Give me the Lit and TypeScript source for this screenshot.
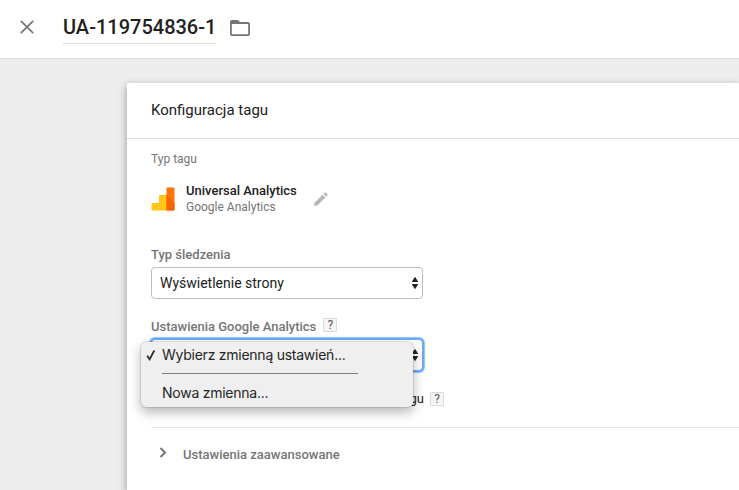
import { LitElement, html, css, svg } from "lit";
import { customElement, property } from "lit/decorators.js";

const arrows = html`<svg class="arrows" width="8" height="14" viewBox="0 0 8 14">
  ${svg`<path d="M4 .7 7.300 6H.7zM4 13.300 7.300 8H.7z" fill="#222"/>`}
</svg>`;

@customElement("select-box")
export class SelectBox extends LitElement {
  @property() label = "";
  @property({ type: Boolean, reflect: true }) focused = false;

  static styles = css`
    :host {
      display: flex;
      align-items: center;
      justify-content: space-between;
      box-sizing: border-box;
      width: 272px;
      height: 32px;
      padding: 0 3px 0 8px;
      border: 1px solid #bdbdbd;
      border-radius: 4px;
      background: #fff;
      color: #212121;
      font-size: 14px;
    }
    :host([focused]) {
      border-color: #6aa9f0;
      box-shadow: 0 0 0 1px #6baaf5, 0 0 1px 2px #8fc0f8;
    }
    svg {
      display: block;
    }
  `;

  render() {
    return html`<span>${this.label}</span>${arrows}`;
  }
}

@customElement("help-badge")
export class HelpBadge extends LitElement {
  static styles = css`
    :host {
      display: block;
      box-sizing: border-box;
      width: 14px;
      height: 14px;
      border: 1px solid #dadada;
      border-radius: 1px;
      background: #f5f5f5;
      color: #555;
      font-size: 12px;
      line-height: 13px;
      text-align: center;
    }
  `;

  render() {
    return html`?`;
  }
}

@customElement("option-menu")
export class OptionMenu extends LitElement {
  static styles = css`
    :host {
      display: flex;
      flex-direction: column;
      box-sizing: border-box;
      width: 272px;
      height: 65px;
      padding-top: 3px;
      border-radius: 5px;
      background: #efefef;
      box-shadow: 0 0 0 0.5px rgba(0, 0, 0, 0.2), 0 5px 12px rgba(0, 0, 0, 0.3);
      color: #262626;
      font: 14px/19px Inter, sans-serif;
      letter-spacing: -0.25px;
    }
    .item {
      display: flex;
      align-items: center;
      height: 19px;
      white-space: nowrap;
    }
    .mark {
      width: 21px;
      box-sizing: border-box;
      padding-left: 5px;
    }
    .mark svg {
      display: block;
    }
    .rule {
      width: 196px;
      height: 1px;
      margin: 9px 0 9px 21px;
      background: #7d7d7d;
    }
  `;

  render() {
    return html`
      <div class="item">
        <span class="mark">
          <svg width="10" height="12" viewBox="0 0 10 12">
            <path d="M1.200 6.800 3.600 10.300 8.300 1.500" fill="none" stroke="#262626" stroke-width="1.700" />
          </svg>
        </span>
        <span>Wybierz zmienną ustawień...</span>
      </div>
      <div class="rule"></div>
      <div class="item"><span class="mark"></span><span>Nowa zmienna...</span></div>
    `;
  }
}

@customElement("app-root")
export class AppRoot extends LitElement {
  static styles = css`
    :host {
      display: flex;
      flex-direction: column;
      height: 490px;
      overflow: hidden;
      background: #ededed;
      color: #212121;
      font-family: Roboto, sans-serif;
    }
    svg {
      display: block;
      flex: none;
    }
    header {
      display: flex;
      align-items: flex-start;
      box-sizing: border-box;
      height: 59px;
      padding-left: 20px;
      background: #fff;
      border-bottom: 1px solid #dcdcdc;
    }
    .close {
      margin: 20px 29px 0 0;
    }
    h1 {
      box-sizing: border-box;
      width: 153px;
      height: 44px;
      margin: 0;
      padding-top: 15px;
      border-bottom: 1px solid #dcdcdc;
      font-size: 20px;
      font-weight: 500;
      line-height: 24px;
      white-space: nowrap;
    }
    .folder {
      margin: 20px 0 0 14px;
    }
    .card {
      flex: 1;
      margin: 24px 0 0 127px;
      border-radius: 2px 0 0 0;
      background: #fff;
      box-shadow: 0 3px 9px rgba(0, 0, 0, 0.38);
    }
    h2 {
      box-sizing: border-box;
      height: 56px;
      margin: 0;
      padding-left: 24px;
      border-bottom: 1px solid #dcdcdc;
      font-size: 15px;
      font-weight: 400;
      line-height: 54px;
    }
    .body {
      padding: 12px 0 0 24px;
    }
    .caption {
      color: #757575;
      font-size: 12px;
      line-height: 16px;
    }
    .type {
      display: flex;
      align-items: center;
      height: 32px;
      margin-top: 16px;
      font-size: 12px;
      line-height: 16px;
      color: #757575;
    }
    .names {
      width: 117px;
      margin-left: 11px;
    }
    .names b {
      display: block;
      color: #212121;
      font-weight: 500;
      font-size: 13px;
    }
    .pencil {
      margin-left: 8.5px;
    }
    .label {
      display: flex;
      align-items: center;
      height: 16px;
      color: #757575;
      font-size: 13px;
      font-weight: 500;
    }
    .label help-badge {
      margin: -2px 0 0 7px;
      font-weight: 400;
    }
    .tracking {
      margin: 31px 0 5px;
    }
    .settings {
      margin: 19px 0 5px;
    }
    .field {
      position: relative;
    }
    option-menu {
      position: absolute;
      left: -10px;
      top: 3px;
      z-index: 1;
    }
    .override {
      display: flex;
      align-items: center;
      justify-content: space-between;
      width: 293px;
      height: 16px;
      margin-top: 20px;
      font-size: 13px;
    }
    .override label {
      width: 273px;
      margin-top: -2px;
      text-align: right;
      white-space: nowrap;
    }
    .advanced {
      display: flex;
      align-items: center;
      height: 52px;
      margin-top: 20px;
      padding-left: 8px;
      border-top: 1px solid #e8e8e8;
      color: #757575;
      font-size: 13px;
      font-weight: 500;
    }
    .chevron {
      margin: -3px 16px 0 0;
    }
  `;

  render() {
    return html`
      <header>
        <svg class="close" width="14" height="14" viewBox="0 0 14 14">
          <path d="M.8.8 13.200 13.200M13.200.8.8 13.200" stroke="#757575" stroke-width="1.700" />
        </svg>
        <h1>UA-119754836-1</h1>
        <svg class="folder" width="20" height="16" viewBox="0 0 20 16">
          <path
            d="M2 0h6l2 2h8a2 2 0 0 1 2 2v10a2 2 0 0 1-2 2H2a2 2 0 0 1-2-2V2a2 2 0 0 1 2-2zM1.800 4v10.200h16.400V4z"
            fill="#757575"
            fill-rule="evenodd"
          />
        </svg>
      </header>
      <section class="card">
        <h2>Konfiguracja tagu</h2>
        <div class="body">
          <div class="caption">Typ tagu</div>
          <div class="type">
            <svg width="24" height="24" viewBox="0 0 24 24">
              <path d="M1.500 16H8V9.200a1.200 1.200 0 0 1 1.200-1.200H16v15.500H1.500A1 1 0 0 1 .5 22.500V17a1 1 0 0 1 1-1z" fill="#ffc517" />
              <path d="M16.500 .5h6a1 1 0 0 1 1 1v21a1 1 0 0 1-1 1H15.500V1.500a1 1 0 0 1 1-1z" fill="#ff7406" />
              <path d="M15.500 8 23.500 16v6.500a1 1 0 0 1-1 1H15.500z" fill="#f76505" />
            </svg>
            <div class="names"><b>Universal Analytics</b>Google Analytics</div>
            <svg class="pencil" width="18" height="18" viewBox="0 0 24 24">
              <path
                d="M3 17.250V21h3.750L17.810 9.940l-3.750-3.750zM20.710 7.040a1 1 0 0 0 0-1.410l-2.340-2.340a1 1 0 0 0-1.410 0l-1.830 1.830 3.750 3.750z"
                fill="#b8b8b8"
              />
            </svg>
          </div>
          <div class="label tracking">Typ śledzenia</div>
          <select-box label="Wyświetlenie strony"></select-box>
          <div class="label settings">Ustawienia Google Analytics<help-badge></help-badge></div>
          <div class="field">
            <select-box focused></select-box>
            <option-menu></option-menu>
          </div>
          <div class="override">
            <label>tagu</label>
            <help-badge></help-badge>
          </div>
          <div class="advanced">
            <svg class="chevron" width="8" height="11" viewBox="0 0 8 11">
              <path d="M1.500 1 6 5.500 1.500 10" fill="none" stroke="#757575" stroke-width="2" />
            </svg>
            Ustawienia zaawansowane
          </div>
        </div>
      </section>
    `;
  }
}
